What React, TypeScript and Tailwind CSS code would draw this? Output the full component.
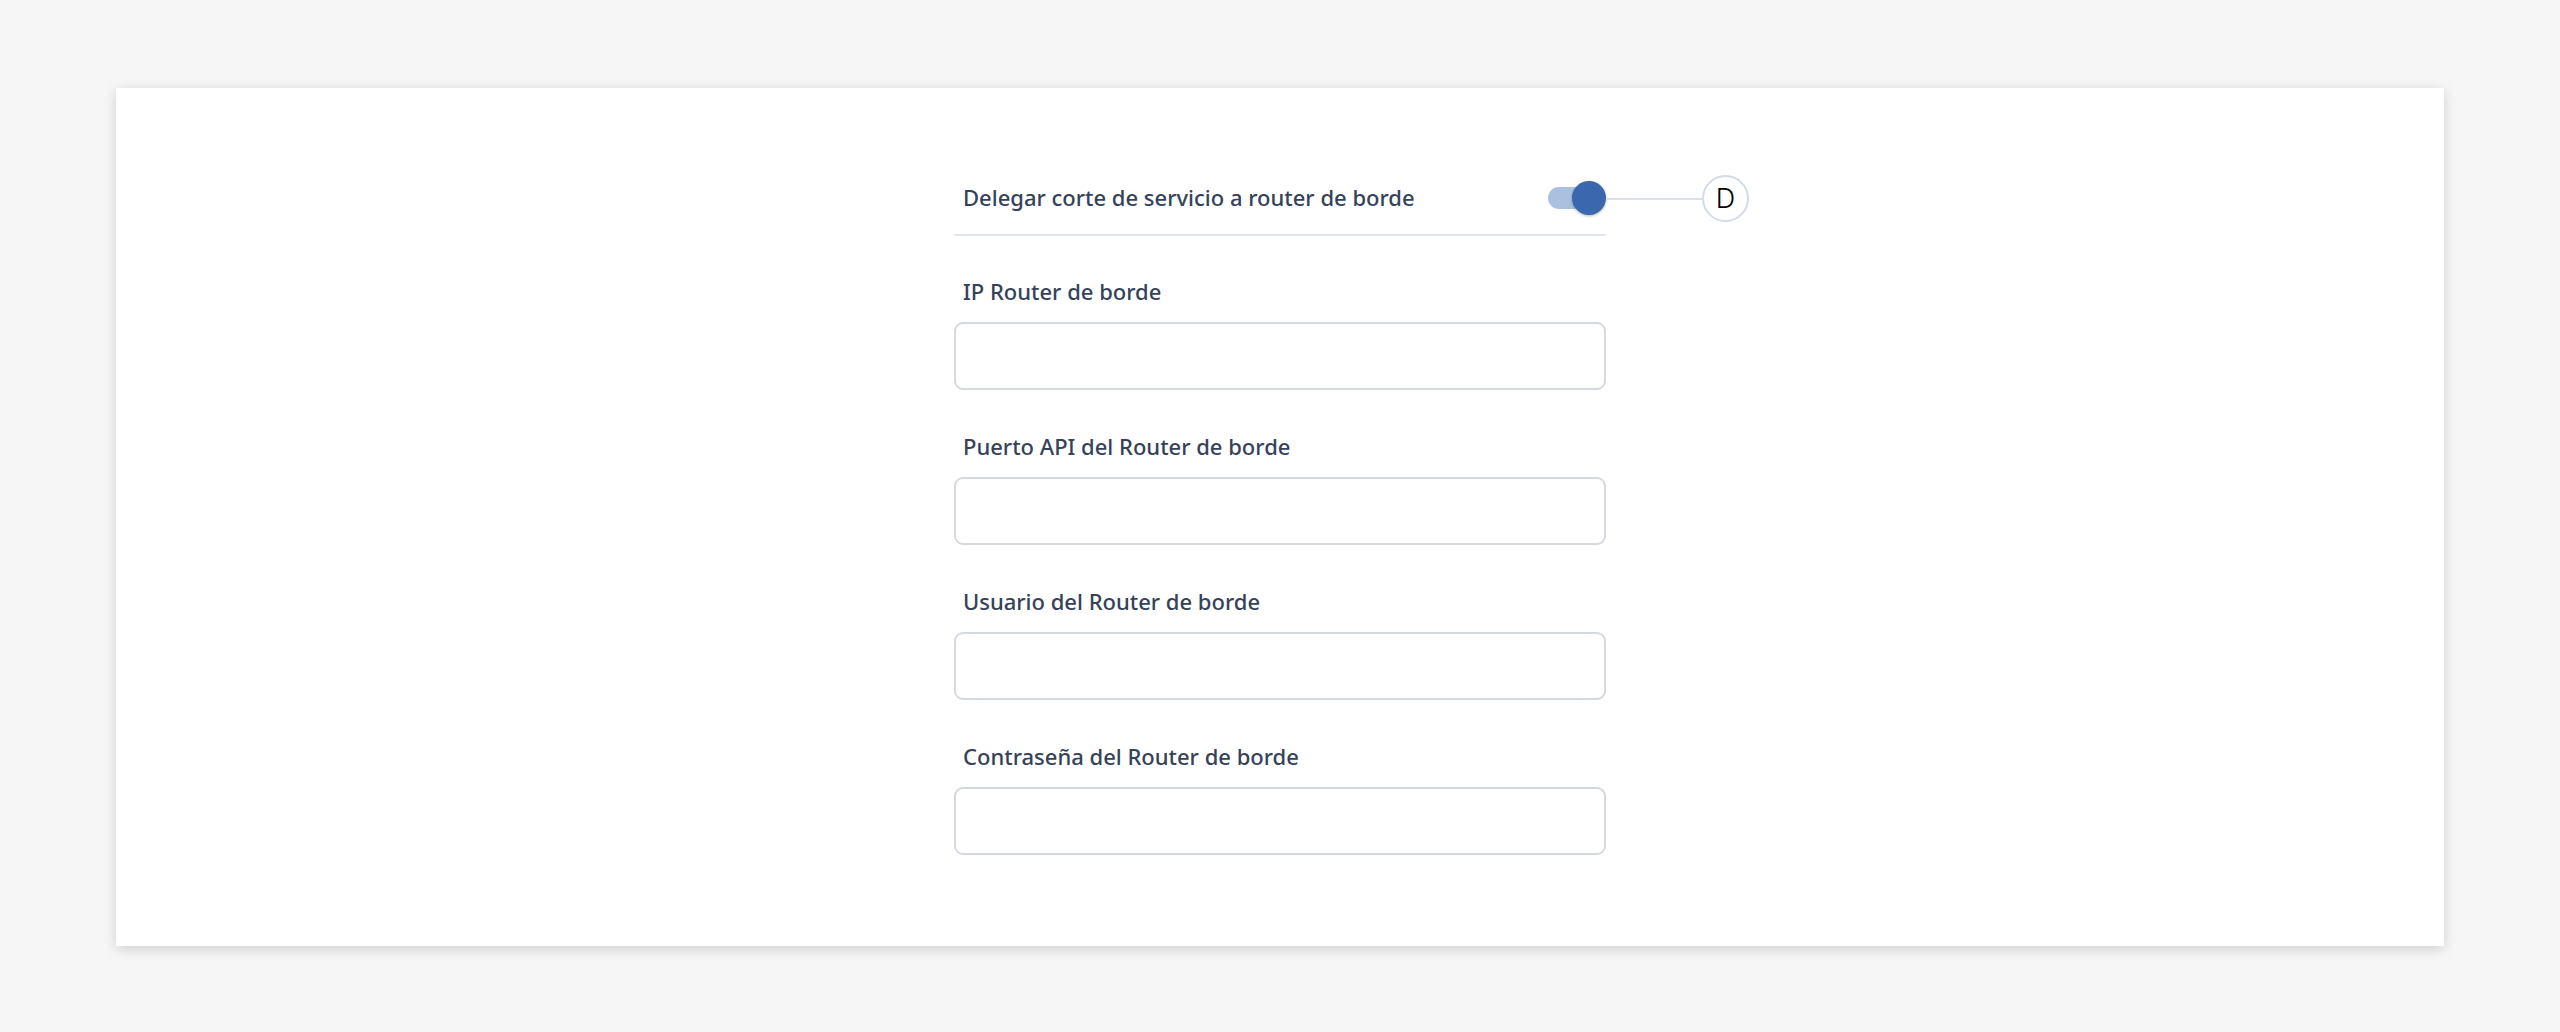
import { useState } from 'react';

const fields = [
  { id: 'ip', label: 'IP Router de borde', type: 'text' },
  { id: 'port', label: 'Puerto API del Router de borde', type: 'text' },
  { id: 'user', label: 'Usuario del Router de borde', type: 'text' },
  { id: 'pass', label: 'Contraseña del Router de borde', type: 'password' },
];

export default function App() {
  const [delegate, setDelegate] = useState(true);

  return (
    <div className="min-h-[1032px] bg-[#f6f6f6] px-[116px] pt-[88px] font-['Noto_Sans',sans-serif]">
      <div className="bg-white pt-[86px] pb-[91px] shadow-[0_3px_12px_rgba(0,0,0,0.16)]">
        <div className="mx-auto w-[652px]">
          {/* Delegate toggle row */}
          <div className="relative flex h-[62px] items-start border-b-2 border-[#e0e5ee] pl-[9px]">
            <div className="flex h-[48px] w-full items-center justify-between">
              <span className="-mt-[3px] text-[22px] leading-[30px] font-medium text-[#35425a]">
                Delegar corte de servicio a router de borde
              </span>
              <button
                type="button"
                onClick={() => setDelegate(!delegate)}
                className="relative flex h-[34px] w-[58px] items-center"
              >
                <span className="absolute left-0 right-[6px] h-[22px] rounded-full bg-[#aac0df]" />
                <span
                  className={
                    delegate
                      ? 'absolute right-0 h-[34px] w-[34px] rounded-full bg-[#3a67ad] shadow-[0_1px_3px_rgba(0,0,0,0.3)]'
                      : 'absolute left-0 h-[34px] w-[34px] rounded-full bg-[#f1f1f1] shadow-[0_1px_3px_rgba(0,0,0,0.3)]'
                  }
                />
              </button>
            </div>
            {/* Step marker */}
            <div className="absolute top-[1px] left-[652px] flex h-[47px] items-center">
              <div className="h-[2px] w-[96px] bg-[#d8dfeb]" />
              <div className="flex h-[47px] w-[47px] items-center justify-center rounded-full border-2 border-[#d3dbe8] bg-white text-[27px] leading-none font-light text-black font-['Inter',sans-serif]">
                D
              </div>
            </div>
          </div>

          {/* Router credentials */}
          <div className="mt-10 flex flex-col gap-[41px]">
            {fields.map((f) => (
              <div key={f.id} className="flex flex-col gap-4">
                <label
                  htmlFor={f.id}
                  className="pl-[9px] text-[22px] leading-[30px] font-medium text-[#35425a]"
                >
                  {f.label}
                </label>
                <input
                  id={f.id}
                  type={f.type}
                  className="h-[68px] w-full rounded-[9px] border-2 border-[#d4d8df] bg-white px-4 text-[20px] text-[#35425a] outline-none"
                />
              </div>
            ))}
          </div>
        </div>
      </div>
    </div>
  );
}
